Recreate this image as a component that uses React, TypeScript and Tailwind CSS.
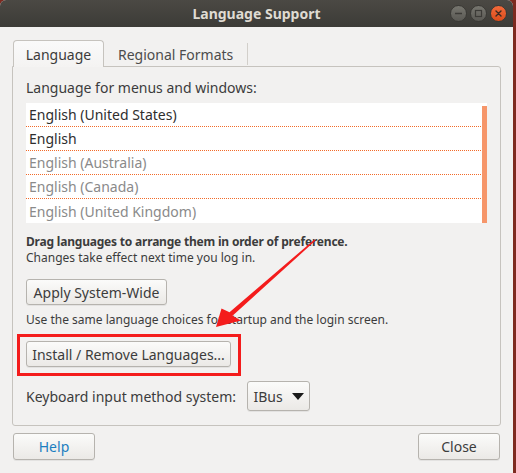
import React from 'react';

const languages = [
  { name: 'English (United States)', active: true },
  { name: 'English', active: true },
  { name: 'English (Australia)', active: false },
  { name: 'English (Canada)', active: false },
  { name: 'English (United Kingdom)', active: false },
];

function TitleButton({ kind }: { kind: 'min' | 'max' | 'close' }) {
  if (kind === 'close') {
    return (
      <div className="w-[17px] h-[17px] rounded-full bg-gradient-to-b from-[#f26a3a] to-[#dc4c1a] border border-[#3a3935] flex items-center justify-center">
        <svg width="7" height="7" viewBox="0 0 7 7">
          <path d="M1 1 L6 6 M6 1 L1 6" stroke="#3a2a22" strokeWidth="1.4" strokeLinecap="round" />
        </svg>
      </div>
    );
  }
  return (
    <div className="w-[17px] h-[17px] rounded-full bg-gradient-to-b from-[#77766f] to-[#5a5954] border border-[#3a3935] flex items-center justify-center">
      <svg width="9" height="9" viewBox="0 0 9 9">
        {kind === 'min' ? (
          <path d="M1 4.5 H8" stroke="#3c3b37" strokeWidth="1.4" />
        ) : (
          <rect x="1.5" y="1.5" width="6" height="6" fill="none" stroke="#3c3b37" strokeWidth="1.2" />
        )}
      </svg>
    </div>
  );
}

function Button({ children, className = '' }: { children: React.ReactNode; className?: string }) {
  return (
    <div
      className={`flex items-center justify-center whitespace-nowrap rounded-[3px] border border-[#b6b3ae] bg-gradient-to-b from-[#fbfbfa] to-[#ebe9e6] shadow-[0_1px_0_rgba(0,0,0,0.06)] ${className}`}
    >
      {children}
    </div>
  );
}

export default function App() {
  return (
    <div
      className="relative w-[516px] h-[473px] flex bg-[#7e2a20] overflow-hidden text-[#3c3c3c]"
      style={{ fontFamily: '"Noto Sans", "Open Sans", sans-serif' }}
    >
      <div className="w-[513px] h-full flex flex-col bg-[#f2f1f0] rounded-t-[6px] overflow-hidden">
        {/* title bar */}
        <div className="h-[27px] shrink-0 relative flex items-center justify-center bg-gradient-to-b from-[#4b4944] to-[#3c3b37]">
          <span className="text-[14px] font-bold text-[#dfdbd2] leading-none">Language Support</span>
          <div className="absolute right-[6px] top-[5px] flex gap-[3px]">
            <TitleButton kind="min" />
            <TitleButton kind="max" />
            <TitleButton kind="close" />
          </div>
        </div>

        {/* tabs */}
        <div className="flex items-end h-[39px] pl-[13px] shrink-0">
          <div className="w-[91px] h-[27px] flex items-center justify-center rounded-t-[4px] border border-b-0 border-[#c6c3be] bg-gradient-to-b from-[#fafafa] to-[#f4f3f2] text-[14px] text-[#3c3c3c] relative z-10 -mb-px">
            Language
          </div>
          <div className="h-[22px] mb-[1px] flex items-center px-[14px] border-r border-[#d2cfca] text-[14px] text-[#4c4c4c]">
            Regional Formats
          </div>
        </div>

        {/* notebook page */}
        <div className="mx-[12px] w-[489px] h-[360px] border border-[#c6c3be] rounded-b-[3px] rounded-tr-[3px] px-[13px] pt-[11px] shrink-0">
          <div className="text-[14px] leading-[20px] text-[#3c3c3c]">Language for menus and windows:</div>

          <div className="mt-[5px] w-[461px] bg-white relative">
            {languages.map((lang, i) => (
              <div
                key={lang.name}
                className={`h-[24px] pl-[3px] flex items-center text-[14px] ${
                  i < languages.length - 1 ? 'border-b border-dotted border-[#f26b2a]' : ''
                } ${lang.active ? 'text-[#2e2e2e]' : 'text-[#8a8a8a]'}`}
              >
                {lang.name}
              </div>
            ))}
            <div className="absolute right-0 top-[3px] bottom-0 w-[5px] bg-[#f6966a]" />
          </div>

          <div className="mt-[11px] text-[12px] leading-[16px] font-bold tracking-[-0.2px] text-[#3c3c3c] whitespace-nowrap">
            Drag languages to arrange them in order of preference.
          </div>
          <div className="text-[12px] leading-[16px] text-[#3c3c3c]">Changes take effect next time you log in.</div>

          <Button className="mt-[13px] w-[141px] h-[26px] text-[14px]">Apply System-Wide</Button>

          <div className="mt-[7px] text-[12px] leading-[16px] text-[#3c3c3c]">
            Use the same language choices for startup and the login screen.
          </div>

          <Button className="mt-[13px] w-[205px] h-[26px] text-[14px]">Install / Remove Languages...</Button>

          <div className="mt-[14px] flex items-center gap-[11px]">
            <span className="text-[14px] whitespace-nowrap">Keyboard input method system:</span>
            <Button className="w-[63px] h-[30px] text-[14px] gap-[9px]">
              <span>IBus</span>
              <svg width="12" height="7" viewBox="0 0 12 7">
                <path d="M0 0 H12 L6 7 Z" fill="#1a1a1a" />
              </svg>
            </Button>
          </div>
        </div>

        {/* bottom buttons */}
        <div className="flex justify-between px-[13px] mt-[7px]">
          <Button className="w-[82px] h-[27px] text-[14px] text-[#1c7ec0]">Help</Button>
          <Button className="w-[82px] h-[27px] text-[14px]">Close</Button>
        </div>
      </div>

      {/* annotation: highlight box */}
      <div className="absolute left-[17px] top-[334px] w-[224px] h-[42px] border-[3px] border-[#f41c1c] pointer-events-none" />

      {/* annotation: arrow */}
      <svg className="absolute left-0 top-0 pointer-events-none" width="516" height="473" viewBox="0 0 516 473">
        <polygon
          points="216,327 221.5,308.5 229.5,312.3 314.5,239.4 315.5,240.6 232.5,315.7 241,320.5"
          fill="#f41c1c"
        />
      </svg>
    </div>
  );
}
